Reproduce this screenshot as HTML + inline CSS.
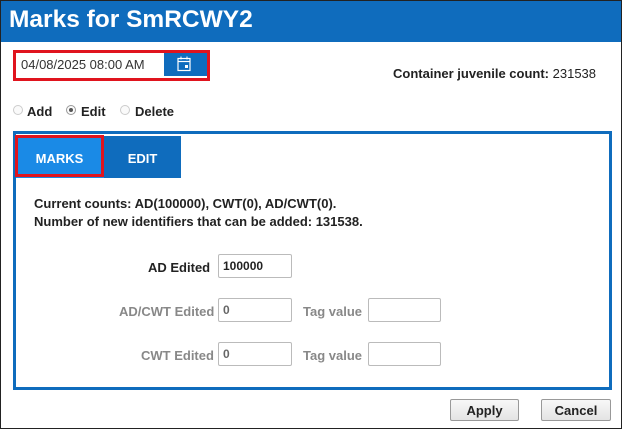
<!DOCTYPE html><html><head><style>
*{box-sizing:border-box;margin:0;padding:0}
body{width:622px;height:429px;position:relative;background:#fff;font-family:"Liberation Sans",sans-serif;overflow:hidden}
.a{position:absolute}
.frame{left:0;top:0;width:622px;height:429px;border:1px solid #222}
.hdr{left:1px;top:1px;width:620px;height:41px;background:#0f6cbd;color:#fff;font-weight:bold;font-size:24.5px;padding:5px 0 0 8px}
.b{font-weight:bold;font-size:13px;color:#222}
.g{font-weight:bold;font-size:13px;color:#888}
.inp{border:1px solid #bbb;border-radius:2px;background:#fff;font-size:12px;font-weight:bold;padding:4px 4px;height:24px;color:#222}
.rad{width:10px;height:10px;border:1px solid #ccc;border-radius:50%;background:#fafafa}
.btn{border:1px solid #999;border-radius:2px;background:linear-gradient(#f8f8f8,#e4e4e4);font-weight:bold;font-size:13px;text-align:center;padding-top:3px;height:22px;color:#222}
</style></head><body>
<div class="a frame"></div>
<div class="a hdr">Marks for SmRCWY2</div>
<div class="a" style="left:13px;top:50px;width:197px;height:31px;border:3px solid #e0141e"></div>
<div class="a" style="left:16px;top:53px;width:148px;height:25px;font-size:13px;color:#333;padding:4px 0 0 5px">04/08/2025 08:00 AM</div>
<div class="a" style="left:164px;top:53px;width:43px;height:23px;background:#0f6cbd"></div>
<svg class="a" style="left:177px;top:56px" width="14" height="16" viewBox="0 0 14 16"><rect x="1" y="2.5" width="12" height="12" fill="none" stroke="#fff" stroke-width="1.2"/><line x1="1" y1="5.5" x2="13" y2="5.5" stroke="#fff" stroke-width="1.2"/><line x1="4" y1="0.5" x2="4" y2="3.5" stroke="#fff"/><line x1="10" y1="0.5" x2="10" y2="3.5" stroke="#fff"/><rect x="8" y="9" width="3" height="3" fill="#fff"/></svg>
<div class="a b" style="left:393px;top:66px">Container juvenile count: <span style="font-weight:normal">231538</span></div>
<div class="a rad" style="left:13px;top:105px"></div><div class="a b" style="left:27px;top:104px">Add</div>
<div class="a rad" style="left:66px;top:105px;border-color:#999"><div style="width:4px;height:4px;background:#555;border-radius:50%;margin:2px"></div></div><div class="a b" style="left:81px;top:104px">Edit</div>
<div class="a rad" style="left:120px;top:105px"></div><div class="a b" style="left:135px;top:104px">Delete</div>
<div class="a" style="left:13px;top:131px;width:599px;height:259px;border:3px solid #0f6cbd"></div>
<div class="a" style="left:16px;top:136px;width:88px;height:42px;background:#1a8ae6"></div>
<div class="a" style="left:104px;top:136px;width:77px;height:42px;background:#0f6cbd;color:#fff;font-weight:bold;font-size:13px;text-align:center;padding-top:15px">EDIT</div>
<div class="a" style="left:15px;top:135px;width:89px;height:42px;border:3px solid #e0141e;color:#fff;font-weight:bold;font-size:13px;text-align:center;padding-top:13px">MARKS</div>
<div class="a b" style="left:34px;top:195px;line-height:18px">Current counts: AD(100000), CWT(0), AD/CWT(0).<br>Number of new identifiers that can be added: 131538.</div>
<div class="a b" style="left:148px;top:260px">AD Edited</div>
<div class="a inp" style="left:218px;top:254px;width:74px">100000</div>
<div class="a g" style="left:119px;top:304px">AD/CWT Edited</div>
<div class="a inp" style="left:218px;top:298px;width:74px;color:#666">0</div>
<div class="a g" style="left:303px;top:304px">Tag value</div>
<div class="a inp" style="left:368px;top:298px;width:73px"></div>
<div class="a g" style="left:141px;top:348px">CWT Edited</div>
<div class="a inp" style="left:218px;top:342px;width:74px;color:#666">0</div>
<div class="a g" style="left:303px;top:348px">Tag value</div>
<div class="a inp" style="left:368px;top:342px;width:73px"></div>
<div class="a btn" style="left:450px;top:399px;width:69px">Apply</div>
<div class="a btn" style="left:541px;top:399px;width:70px">Cancel</div>
</body></html>
